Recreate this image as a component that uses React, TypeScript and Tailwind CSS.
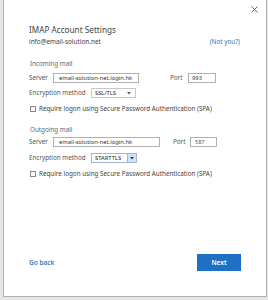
import React from "react";

const font = { fontFamily: '"Noto Sans", "Open Sans", sans-serif' };

function Check({ label }: { label: string }) {
  return (
    <div className="flex h-[10px] items-center pl-[1px]">
      <div className="h-[6px] w-[6px] border border-[#8a8a8a] bg-white" />
      <span className="ml-[3px] text-[6.3px] leading-[10px] text-[#444]">{label}</span>
    </div>
  );
}

export default function App() {
  return (
    <div className="h-[300px] w-[268px] bg-[#e6e6e6] pb-[3px] pl-[3px] pr-[1px]" style={font}>
      <div className="flex h-full flex-col border-b border-l border-r border-[#b0b0b0] bg-white">
        <div className="flex h-[18px] items-center justify-end pr-[8px]">
          <svg width="7" height="7" viewBox="0 0 7 7">
            <path d="M0.5 0.5 L6.5 6.5 M6.5 0.5 L0.5 6.5" stroke="#555" strokeWidth="0.9" />
          </svg>
        </div>
        <div className="pl-[25px] pr-[26px]">
          <div className="mt-[6px] h-[12px] text-[8.2px] leading-[12px] text-[#444]">IMAP Account Settings</div>
          <div className="mt-[1px] flex h-[10px] items-center justify-between text-[6.4px] leading-[10px]">
            <span className="text-[#444]">info@email-solution.net</span>
            <span className="text-[#2b79b9]">(Not you?)</span>
          </div>

          <div className="mt-[12px] h-[10px] pl-[1px] text-[6.3px] leading-[10px] text-[#666]">Incoming mail</div>
          <div className="mt-[4px] flex h-[10px] items-center">
            <span className="w-[24px] text-[6.3px] leading-[10px] text-[#555]">Server</span>
            <div className="flex h-[10px] w-[86px] items-center border border-[#b0b0b0] pl-[5px] text-[5.8px] text-[#333]">
              email-solution-net.login.hk
            </div>
            <span className="ml-[31px] w-[18px] text-[6.3px] leading-[10px] text-[#555]">Port</span>
            <div className="flex h-[10px] w-[28px] items-center border border-[#b0b0b0] pl-[3px] text-[5.8px] text-[#333]">
              993
            </div>
          </div>
          <div className="mt-[5px] flex h-[10px] items-center">
            <span className="w-[62px] text-[6.3px] leading-[10px] text-[#555]">Encryption method</span>
            <div className="flex h-[10px] w-[45px] items-center justify-between border border-[#c8c8c8] pl-[3px] pr-[4px] text-[5.8px] text-[#222]">
              <span>SSL/TLS</span>
              <svg width="4" height="3" viewBox="0 0 4 3">
                <path d="M0 0 L4 0 L2 2.5 Z" fill="#555" />
              </svg>
            </div>
          </div>
          <div className="mt-[6px]">
            <Check label="Require logon using Secure Password Authentication (SPA)" />
          </div>

          <div className="mt-[11px] h-[10px] pl-[1px] text-[6.3px] leading-[10px] text-[#666]">Outgoing mail</div>
          <div className="mt-[2px] flex h-[10px] items-center">
            <span className="w-[24px] text-[6.3px] leading-[10px] text-[#555]">Server</span>
            <div className="flex h-[10px] w-[107px] items-center border border-[#b0b0b0] pl-[5px] text-[5.8px] text-[#333]">
              email-solution-net.login.hk
            </div>
            <span className="ml-[13px] w-[17px] text-[6.3px] leading-[10px] text-[#555]">Port</span>
            <div className="flex h-[10px] w-[27px] items-center border border-[#b0b0b0] pl-[4px] text-[5.5px] text-[#555]">
              587
            </div>
          </div>
          <div className="mt-[6px] flex h-[10px] items-center">
            <span className="w-[62px] text-[6.3px] leading-[10px] text-[#555]">Encryption method</span>
            <div className="flex h-[10px] w-[46px] items-center border border-[#9ab8d6] bg-white text-[5.8px] text-[#222]">
              <span className="flex-1 pl-[3px]">STARTTLS</span>
              <div className="flex h-full w-[9px] items-center justify-center border-l border-[#9ab8d6] bg-[#cfe3f5]">
                <svg width="4" height="3" viewBox="0 0 4 3">
                  <path d="M0 0 L4 0 L2 2.5 Z" fill="#333" />
                </svg>
              </div>
            </div>
          </div>
          <div className="mt-[6px]">
            <Check label="Require logon using Secure Password Authentication (SPA)" />
          </div>
        </div>
        <div className="flex-1" />
        <div className="mb-[25px] flex h-[17px] items-center justify-between pl-[25px] pr-[25px]">
          <span className="text-[6.5px] font-semibold text-[#3a80bb]">Go back</span>
          <div className="flex h-[17px] w-[44px] items-center justify-center bg-[#1f6fc4] text-[6.5px] font-semibold text-white">
            Next
          </div>
        </div>
      </div>
    </div>
  );
}
